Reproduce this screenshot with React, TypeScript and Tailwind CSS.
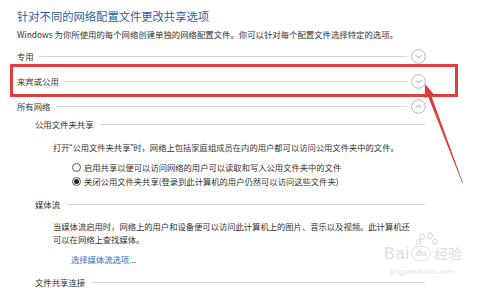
import React from 'react';

const font = { fontFamily: '"Noto Sans CJK SC", "Noto Sans", sans-serif' };
const latin = { fontFamily: '"Liberation Sans", sans-serif' };

function Circle({ up }: { up?: boolean }) {
  return (
    <svg width="15" height="15" viewBox="0 0 15 15" className="shrink-0">
      <circle cx="7.5" cy="7.5" r="6.8" fill="white" stroke="#b9b9b9" strokeWidth="1" />
      <path
        d={up ? 'M4.8 8.8 L7.5 6 L10.2 8.8' : 'M4.8 6.3 L7.5 9 L10.2 6.3'}
        fill="none"
        stroke="#9a9a9a"
        strokeWidth="1"
      />
    </svg>
  );
}

function ProfileRow({ label, up }: { label: string; up?: boolean }) {
  return (
    <div className="flex items-center h-[14px] w-[409px]">
      <span className="text-[8.4px] text-[#333] whitespace-nowrap">{label}</span>
      <div className="flex-1 h-px bg-[#d6d6d6] ml-[5px] mr-[4px]" />
      <Circle up={up} />
    </div>
  );
}

function SubHeader({ label }: { label: string }) {
  return (
    <div className="flex items-center h-[14px] w-[390px] ml-[18px]">
      <span className="text-[8.4px] text-[#333] whitespace-nowrap">{label}</span>
      <div className="flex-1 h-px bg-[#d6d6d6] ml-[7px]" />
    </div>
  );
}

function Radio({ checked, label }: { checked?: boolean; label: string }) {
  return (
    <div className="flex items-center h-[12px] ml-[55px]">
      <span className="w-[9px] h-[9px] rounded-full border border-[#555] bg-white flex items-center justify-center shrink-0">
        {checked && <span className="w-[5px] h-[5px] rounded-full bg-[#222]" />}
      </span>
      <span className="text-[8.3px] text-[#333] ml-[3px] whitespace-nowrap">{label}</span>
    </div>
  );
}

export default function App() {
  return (
    <div className="relative w-[500px] h-[290px] bg-white overflow-hidden" style={font}>
      <div className="flex flex-col pl-[17px] pt-[4px]">
        <div className="h-[24px] flex items-center text-[11.3px] text-[#1f5fa6] whitespace-nowrap">
          针对不同的网络配置文件更改共享选项
        </div>
        <div className="h-[12px] flex items-center text-[8.4px] text-[#333] whitespace-nowrap">
          Windows 为你所使用的每个网络创建单独的网络配置文件。你可以针对每个配置文件选择特定的选项。
        </div>

        <div className="mt-[9px]">
          <ProfileRow label="专用" />
        </div>

        {/* highlighted row */}
        <div className="mt-[1px] -ml-[7px] w-[448px] h-[33px] border-[3px] border-[#e23e3e] flex items-center pl-[4px]">
          <div className="mt-[2px]">
            <ProfileRow label="来宾或公用" />
          </div>
        </div>

        <div className="mt-[2px]">
          <ProfileRow label="所有网络" up />
        </div>

        <div className="mt-[4px]">
          <SubHeader label="公用文件夹共享" />
        </div>

        <div className="mt-[10px] h-[12px] flex items-center ml-[36px] text-[8.3px] text-[#333] whitespace-nowrap">
          打开<span style={latin}>“</span>公用文件夹共享<span style={latin}>”</span>时，网络上包括家庭组成员在内的用户都可以访问公用文件夹中的文件。
        </div>

        <div className="mt-[8px]">
          <Radio label="启用共享以便可以访问网络的用户可以读取和写入公用文件夹中的文件" />
        </div>
        <div className="mt-[2px]">
          <Radio checked label="关闭公用文件夹共享(登录到此计算机的用户仍然可以访问这些文件夹)" />
        </div>

        <div className="mt-[10px]">
          <SubHeader label="媒体流" />
        </div>

        <div className="mt-[9px] ml-[36px] self-start text-[8.3px] leading-[13px] text-[#333] whitespace-nowrap">
          当媒体流启用时，网络上的用户和设备便可以访问此计算机上的图片、音乐以及视频。此计算机还
          <br />
          可以在网络上查找媒体。
        </div>

        <div className="mt-[7px] h-[12px] self-start flex items-center ml-[54px] text-[8.3px] text-[#2b6cc0] whitespace-nowrap">
          选择媒体流选项...
        </div>

        <div className="mt-[10px]">
          <SubHeader label="文件共享连接" />
        </div>
      </div>

      {/* watermark */}
      <div className="absolute left-[384px] top-[232px] w-[95px] h-[52px] text-[#dedede] select-none">
        <svg width="22" height="14" viewBox="0 0 22 14" className="absolute left-[32px] top-[0px]">
          <ellipse cx="6" cy="4.5" rx="2.4" ry="3" fill="none" stroke="#e0e0e0" strokeWidth="1.2" />
          <ellipse cx="14" cy="3.8" rx="2.4" ry="3" fill="none" stroke="#e0e0e0" strokeWidth="1.2" />
          <ellipse cx="2.5" cy="10" rx="1.9" ry="2.4" fill="none" stroke="#e0e0e0" strokeWidth="1.2" />
          <ellipse cx="19" cy="9.5" rx="1.9" ry="2.4" fill="none" stroke="#e0e0e0" strokeWidth="1.2" />
        </svg>
        <div className="absolute left-0 top-[13px] flex items-center">
          <span className="text-[16px] leading-[17px] tracking-[1px]" style={latin}>
            Bai
          </span>
          <span className="ml-[1px] w-[20px] h-[15px] rounded-full border-[1.5px] border-[#dedede] text-[9px] leading-[11px] font-bold flex items-center justify-center" style={latin}>
            du
          </span>
          <span className="ml-[3px] text-[14px] leading-[17px]">经验</span>
        </div>
        <div className="absolute left-[6px] top-[35px] text-[8px] leading-[10px] text-[#e2e2e2] whitespace-nowrap" style={latin}>
          jingyan.baidu.com
        </div>
      </div>

      {/* annotation arrow */}
      <svg width="500" height="290" className="absolute left-0 top-0 pointer-events-none">
        <polygon points="463,183 431.2,95.5 428.2,96.8 462.4,183.2" fill="#e23a3a" />
        <polygon points="425,84 434,94.5 424.8,98" fill="#e23a3a" />
      </svg>
    </div>
  );
}
